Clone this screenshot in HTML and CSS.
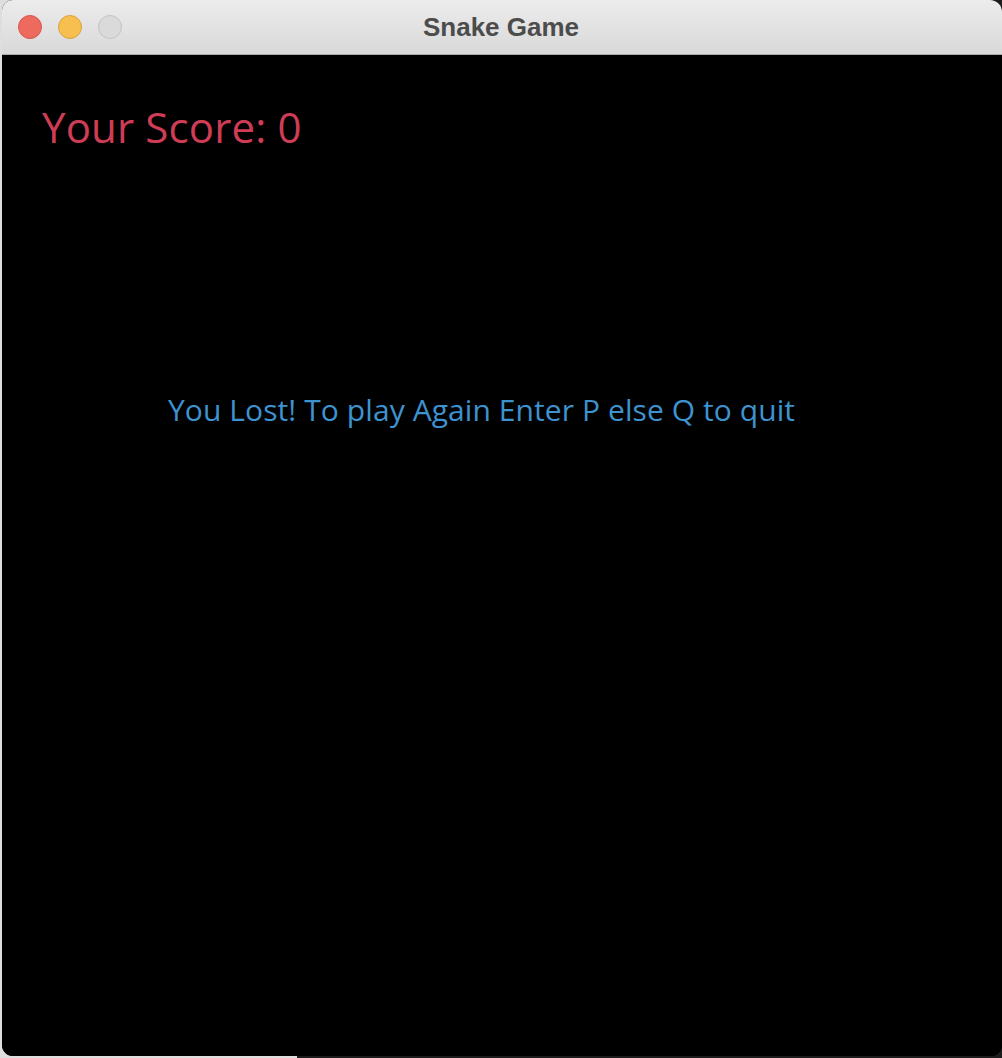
FILE: index.html
```html
<!DOCTYPE html>
<html>
<head>
<meta charset="utf-8">
<title>Snake Game</title>
<link rel="stylesheet" href="styles.css">
</head>
<body>
<div class="window">
  <div class="titlebar">
    <div class="lights">
      <span class="light red"></span>
      <span class="light yellow"></span>
      <span class="light gray"></span>
    </div>
    <div class="title">Snake Game</div>
  </div>
  <div class="canvas">
    <div class="score">Your Score: 0</div>
    <div class="message">You Lost! To play Again Enter P else Q to quit</div>
  </div>
</div>
</body>
</html>
```
FILE: styles.css
```css
html, body {
  margin: 0;
  padding: 0;
}
body {
  width: 1002px;
  height: 1058px;
  overflow: hidden;
  background: linear-gradient(to right, #dedede 0, #dedede 297px, #1c1c1c 297px, #1c1c1c 100%);
}
.window {
  margin-left: 2px;
  width: 1000px;
  height: 1056px;
  display: flex;
  flex-direction: column;
  border-radius: 11px 12px 11px 11px;
  overflow: hidden;
  background: #000;
}
.titlebar {
  position: relative;
  height: 54px;
  flex: 0 0 54px;
  background: linear-gradient(#ececec, #d9d9d9);
  border-bottom: 1px solid #ababab;
  display: flex;
  align-items: center;
  justify-content: center;
}
.lights {
  position: absolute;
  left: 16px;
  top: 15px;
  display: flex;
  gap: 16px;
}
.light {
  width: 22px;
  height: 22px;
  border-radius: 50%;
  border: 1px solid transparent;
}
.light.red { background: #ee6a5e; border-color: #d4574c; }
.light.yellow { background: #f6bf4f; border-color: #d9a33f; }
.light.gray { background: #dadada; border-color: #c3c3c3; }
.title {
  font-family: "Liberation Sans", Arial, sans-serif;
  font-weight: bold;
  font-size: 26px;
  color: #4c4c4c;
  margin-left: -2px;
}
.canvas {
  flex: 1;
  background: #000;
  padding: 51px 0 0 40px;
}
.score {
  font-family: "Open Sans", sans-serif;
  font-size: 42px;
  line-height: 42px;
  letter-spacing: 0.15px;
  color: #cf3c55;
}
.message {
  margin-top: 247px;
  margin-left: 126px;
  font-family: "Open Sans", sans-serif;
  font-size: 30px;
  line-height: 30px;
  letter-spacing: 0.08px;
  color: #3d93cf;
}
```
